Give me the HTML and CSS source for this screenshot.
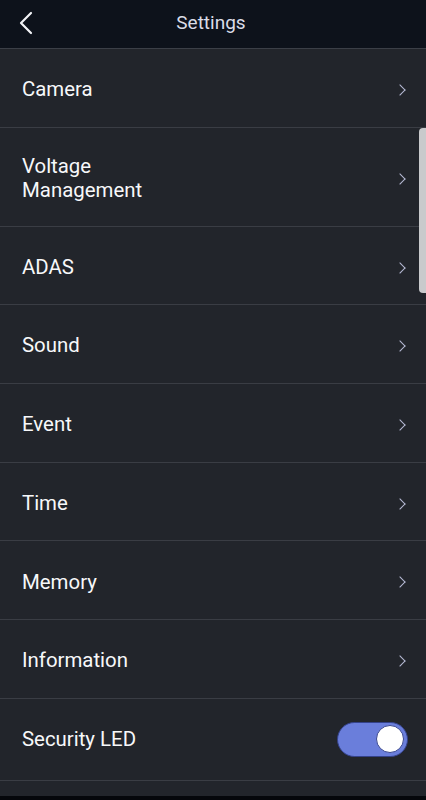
FILE: index.html
```html
<!DOCTYPE html>
<html lang="en">
<head>
    <meta charset="UTF-8">
    <title>Settings</title>
    <link rel="stylesheet" href="styles.css">
</head>
<body>
    <div class="screen">
        <header class="topbar">
            <button class="back" aria-label="Back">
                <svg width="16" height="24" viewBox="0 0 16 24">
                    <path d="M13 2 L3 12 L13 22" fill="none" stroke="#f2f3f7" stroke-width="2.2" stroke-linecap="round" stroke-linejoin="round"/>
                </svg>
            </button>
            <h1 class="title">Settings</h1>
        </header>

        <!-- list of settings -->
        <ul class="list">
            <li class="row"><span class="label">Camera</span><span class="chev"></span></li>
            <li class="row tall"><span class="label">Voltage Management</span><span class="chev"></span></li>
            <li class="row"><span class="label">ADAS</span><span class="chev"></span></li>
            <li class="row"><span class="label">Sound</span><span class="chev"></span></li>
            <li class="row"><span class="label">Event</span><span class="chev"></span></li>
            <li class="row"><span class="label">Time</span><span class="chev"></span></li>
            <li class="row"><span class="label">Memory</span><span class="chev"></span></li>
            <li class="row"><span class="label">Information</span><span class="chev"></span></li>
            <li class="row last">
                <span class="label">Security LED</span>
                <span class="switch on"><span class="knob"></span></span>
            </li>
        </ul>
        <div class="scrollbar"></div>
        <div class="navbar"></div>
    </div>
</body>
</html>
```

FILE: styles.css
```css
* {
    box-sizing: border-box;
}
body {
    margin: 0;
    background-color: #22252b;
    font-family: Roboto, "Liberation Sans", sans-serif;
    color: #f4f5f7;
}
.screen {
    position: relative;
    width: 426px;
    height: 800px;
    overflow: hidden;
    display: flex;
    flex-direction: column;
    background-color: #22252b;
}
.topbar {
    position: relative;
    height: 49px;
    flex-shrink: 0;
    display: flex;
    align-items: center;
    justify-content: center;
    background-color: #0d121b;
    border-bottom: 1px solid #3b3f47;
}
.back {
    position: absolute;
    left: 18px;
    top: 11px;
    padding: 0;
    border: 0;
    background: none;
    display: flex;
}
.title {
    margin: 0;
    font-size: 19px;
    font-weight: 400;
    color: #dadde8;
    margin-top: -3px;
    margin-right: 4px;
}
.list {
    list-style: none;
    margin: 0;
    padding: 0;
    flex: 1;
}
.row {
    height: 78.7px;
    display: flex;
    align-items: center;
    justify-content: space-between;
    padding: 4px 20px 0 22px;
    border-bottom: 1px solid #3a3d44;
}
.row.tall {
    height: 99px;
}
.row.last {
    height: 82px;
    padding: 0 18px 0 22px;
}
.label {
    max-width: 150px;
    font-size: 20.4px;
    line-height: 23.5px;
    color: #f7f8fa;
}
.chev {
    width: 8px;
    height: 8px;
    margin-right: 2px;
    border-top: 1.5px solid #b7bbd6;
    border-right: 1.5px solid #b7bbd6;
    transform: rotate(45deg);
}
.switch {
    width: 71px;
    height: 35px;
    border-radius: 18px;
    background-color: #6a7edb;
    border: 1px solid #34428a;
    display: flex;
    align-items: center;
    justify-content: flex-end;
    padding-right: 3px;
}
.knob {
    width: 28px;
    height: 28px;
    border-radius: 50%;
    background-color: #ffffff;
    border: 1px solid #3a4890;
}
.scrollbar {
    position: absolute;
    right: 0;
    top: 128px;
    width: 7px;
    height: 165px;
    border-radius: 4px 0 0 4px;
    background-color: #c9cacc;
}
.navbar {
    height: 4px;
    flex-shrink: 0;
    background-color: #05070b;
}
```
